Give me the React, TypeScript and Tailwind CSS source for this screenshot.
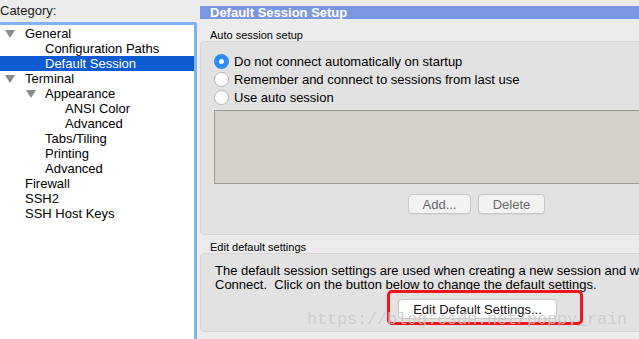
import { ReactNode } from 'react';

type Node = { label: string; depth: number; open?: boolean; selected?: boolean };

const tree: Node[] = [
    { label: 'General', depth: 0, open: true },
    { label: 'Configuration Paths', depth: 1 },
    { label: 'Default Session', depth: 1, selected: true },
    { label: 'Terminal', depth: 0, open: true },
    { label: 'Appearance', depth: 1, open: true },
    { label: 'ANSI Color', depth: 2 },
    { label: 'Advanced', depth: 2 },
    { label: 'Tabs/Tiling', depth: 1 },
    { label: 'Printing', depth: 1 },
    { label: 'Advanced', depth: 1 },
    { label: 'Firewall', depth: 0 },
    { label: 'SSH2', depth: 0 },
    { label: 'SSH Host Keys', depth: 0 },
];

const indent = ['pl-[25px]', 'pl-[45px]', 'pl-[65px]'];
const arrowPos = ['left-[5px]', 'left-[26px]', 'left-[46px]'];

function Radio({ checked, children }: { checked?: boolean; children: ReactNode }) {
    return (
        <div className="flex items-center h-[18px]">
            {checked ? (
                <span className="w-[15px] h-[15px] rounded-full bg-[#2b8cf5] flex items-center justify-center mr-[5px]">
                    <span className="w-[5px] h-[5px] rounded-full bg-white" />
                </span>
            ) : (
                <span className="w-[15px] h-[15px] rounded-full bg-white border border-[#b5b5b5] mr-[5px]" />
            )}
            <span>{children}</span>
        </div>
    );
}

function MacButton({ children, className }: { children: ReactNode; className?: string }) {
    return (
        <div className={'h-[20px] rounded-[4px] border border-[#c8c8c8] bg-[#f2f2f2] flex items-center justify-center text-[#6a6a6a] shadow-[0_1px_0_rgba(0,0,0,0.05)] ' + (className ?? '')}>
            {children}
        </div>
    );
}

export default function App() {
    return (
        <div className="w-[639px] h-[339px] overflow-hidden bg-[#ececec] flex text-[13px] leading-[15px] text-black font-['Liberation_Sans',Arial,sans-serif]">
            {/* left: category tree */}
            <div className="w-[197px] shrink-0 flex flex-col">
                <div className="h-[22px] pt-[3px] text-[#1a1a1a]">Category:</div>
                <div className="flex-1 bg-white border-t-[3px] border-r-[3px] border-[#80b2f6] rounded-tr-[3px] pt-[1px]">
                    {tree.map((n, i) => (
                        <div
                            key={i}
                            className={
                                'relative h-[15px] ' +
                                indent[n.depth] +
                                (n.selected ? ' bg-[#0e5ad2] text-white' : '')
                            }
                        >
                            {n.open && (
                                <span className={'absolute top-[4px] w-0 h-0 border-l-[5px] border-r-[5px] border-t-[8px] border-l-transparent border-r-transparent border-t-[#8a8a8a] ' + arrowPos[n.depth]} />
                            )}
                            {n.label}
                        </div>
                    ))}
                </div>
            </div>

            {/* right: setup page */}
            <div className="flex-1 pl-[3px] pt-[6px] flex flex-col min-w-0">
                <div className="h-[13px] bg-[#7b97e1] text-white font-bold leading-[13px] pl-[10px] whitespace-nowrap">
                    Default Session Setup
                </div>

                <div className="pl-[10px] mt-[10px] h-[12px] text-[11px] leading-[12px]">Auto session setup</div>
                <div className="h-[194px] -mr-[6px] bg-[#e2e2e2] border border-[#d6d6d6] rounded-[4px] pl-[13px] pt-[10px] flex flex-col">
                    <Radio checked>Do not connect automatically on startup</Radio>
                    <Radio>Remember and connect to sessions from last use</Radio>
                    <Radio>Use auto session</Radio>
                    <div className="h-[74px] mt-[4px] bg-[#d4d0ca] border border-[#9c9b97]" />
                    <div className="flex gap-[7px] mt-[10px] pl-[194px]">
                        <MacButton className="w-[63px]">Add...</MacButton>
                        <MacButton className="w-[67px]">Delete</MacButton>
                    </div>
                </div>

                <div className="pl-[10px] mt-[6px] h-[12px] text-[11px] leading-[12px]">Edit default settings</div>
                <div className="relative h-[79px] -mr-[6px] bg-[#e2e2e2] border border-[#d6d6d6] rounded-[4px] pl-[14px] pt-[10px]">
                    <div className="whitespace-nowrap leading-[14px]">
                        The default session settings are used when creating a new session and when using Quick
                    </div>
                    <div className="whitespace-nowrap leading-[14px]">
                        Connect.&nbsp; Click on the button below to change the default settings.
                    </div>
                    <div className="mt-[7px] ml-[183px] w-[159px] h-[20px] rounded-[4px] bg-white border border-[#c8c8c8] flex items-center justify-center text-[#111]">
                        Edit Default Settings...
                    </div>
                    {/* highlight drawn over the screenshot */}
                    <div className="absolute left-[186px] top-[36px] w-[196px] h-[35px] border-[3px] border-[#f2151b] rounded-[5px]" />
                    <div className="absolute left-[106px] top-[56px] whitespace-nowrap text-[17px] leading-[20px] text-[#c8c8c8]/80 font-['Liberation_Mono',monospace] tracking-[-0.2px]">
                        https://blog.csdn.net/poppy_rain
                    </div>
                </div>
            </div>
        </div>
    );
}
